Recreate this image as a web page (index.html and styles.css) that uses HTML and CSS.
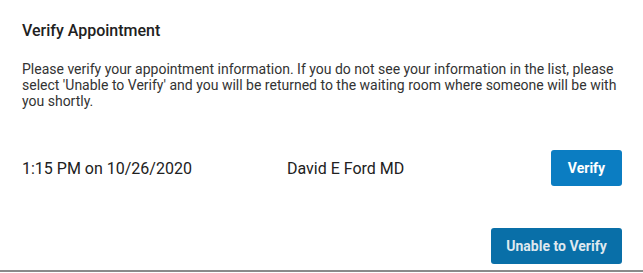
FILE: index.html
```html
<!DOCTYPE html>
<html lang="en">
<head>
<meta charset="utf-8">
<title>Verify Appointment</title>
<link rel="stylesheet" href="styles.css">
</head>
<body>
<div class="dialog">
  <h2 class="title">Verify Appointment</h2>
  <p class="intro">Please verify your appointment information. If you do not see your information in the list, please select 'Unable to Verify' and you will be returned to the waiting room where someone will be with you shortly.</p>
  <div class="appt">
    <span class="when">1:15 PM on 10/26/2020</span>
    <span class="who">David E Ford MD</span>
    <button class="btn btn-verify">Verify</button>
  </div>
  <div class="footer">
    <button class="btn btn-unable">Unable to Verify</button>
  </div>
</div>
</body>
</html>
```
FILE: styles.css
```css
html, body {
  margin: 0;
  padding: 0;
  background: #ffffff;
}
body {
  font-family: Roboto, "Liberation Sans", sans-serif;
  color: #212121;
}
.dialog {
  box-sizing: border-box;
  height: 272px;
  padding: 20px 21px 0 22px;
  border-bottom: 2px solid #8a8a8a;
  display: flex;
  flex-direction: column;
}
.title {
  margin: 0;
  font-size: 16px;
  font-weight: 500;
  line-height: 22px;
}
.intro {
  margin: 19px 0 0 0;
  font-size: 14px;
  line-height: 16px;
  color: #333;
}
.appt {
  margin-top: 41px;
  display: flex;
  align-items: center;
  font-size: 16px;
}
.when {
  width: 265px;
}
.who {
  flex: 1;
}
.btn {
  font-family: Roboto, "Liberation Sans", sans-serif;
  font-size: 14px;
  font-weight: 700;
  font-stretch: 90%;
  height: 36px;
  border: none;
  border-radius: 3px;
  color: #ffffff;
  padding: 0;
  white-space: nowrap;
}
.btn-verify {
  width: 71px;
  background: #0b7dc2;
}
.footer {
  margin-top: 42px;
  display: flex;
  justify-content: flex-end;
}
.btn-unable {
  width: 131px;
  background: #096fa8;
  color: #dfe8ef;
}
```
